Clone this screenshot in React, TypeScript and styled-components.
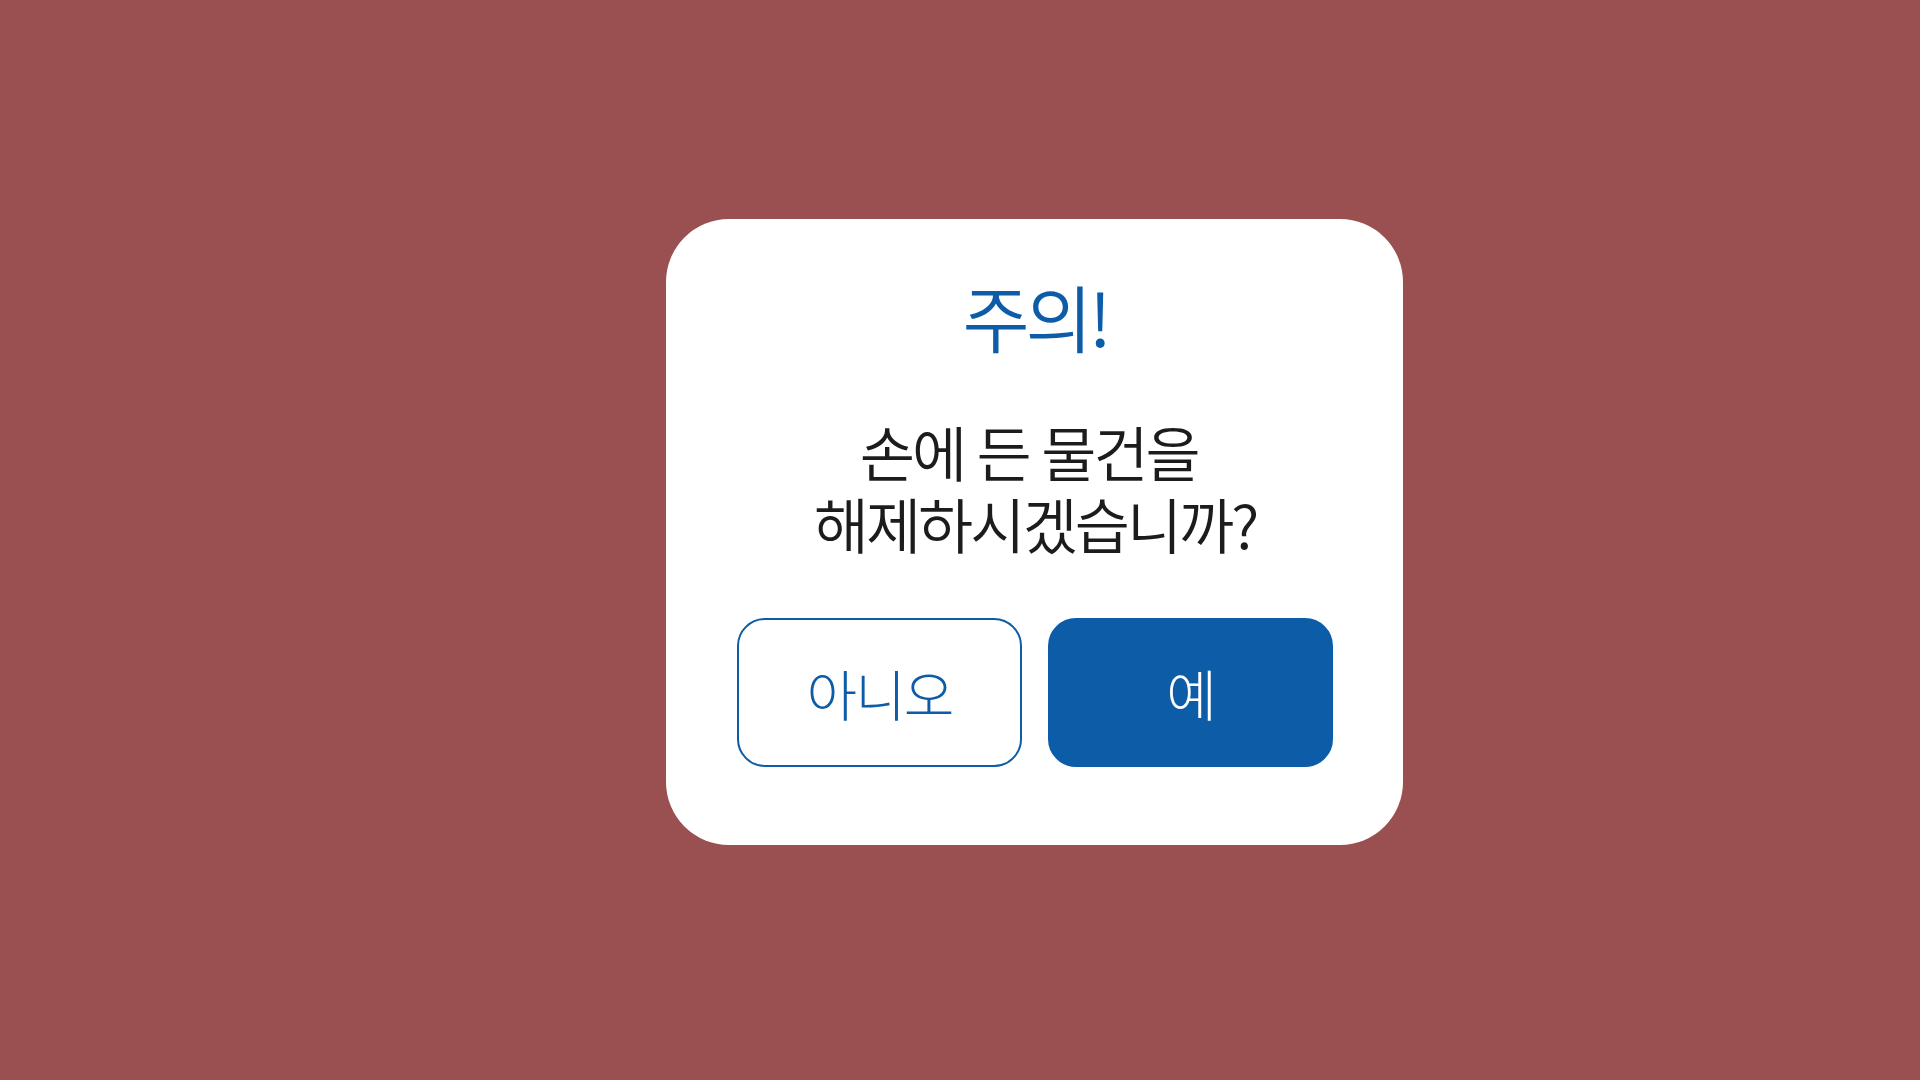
import React from "react";
import styled, { createGlobalStyle } from "styled-components";

const Global = createGlobalStyle`
  html, body { margin: 0; padding: 0; }
  body {
    background: #9a5050;
    font-family: "Noto Sans CJK KR", "Noto Sans", sans-serif;
  }
`;

const Page = styled.div`
  width: 1920px;
  height: 1080px;
  box-sizing: border-box;
  padding: 219px 0 0 666px;
  display: flex;
  align-items: flex-start;
`;

const Card = styled.div`
  width: 737px;
  height: 626px;
  box-sizing: border-box;
  background: #ffffff;
  border-radius: 63px;
  padding: 51px 70px 0 71px;
  display: flex;
  flex-direction: column;
  align-items: center;
`;

const Title = styled.h1`
  margin: 0;
  font-size: 73px;
  font-weight: 350;
  letter-spacing: -4px;
  line-height: 90px;
  color: #0c5ca8;
`;

const Message = styled.p`
  margin: 55px 0 0;
  font-size: 60px;
  font-weight: 350;
  letter-spacing: -3px;
  word-spacing: 2px;
  line-height: 72px;
  color: #1c1c1c;
  text-align: center;
`;

const Actions = styled.div`
  margin-top: auto;
  margin-bottom: 78px;
  display: grid;
  grid-template-columns: 285px 285px;
  gap: 26px;
`;

const Button = styled.button<{ $primary?: boolean }>`
  height: 149px;
  box-sizing: border-box;
  border-radius: 28px;
  border: 2px solid #0c5ca8;
  background: ${(p) => (p.$primary ? "#0c5ca8" : "#ffffff")};
  color: ${(p) => (p.$primary ? "#ffffff" : "#0c5ca8")};
  font-family: "Noto Sans CJK KR", "Noto Sans", sans-serif;
  font-size: 55px;
  font-weight: 300;
  letter-spacing: -2px;
  padding: 0 0 2px;
  cursor: pointer;
`;

export default function App() {
  return (
    <>
      <Global />
      <Page>
        <Card>
          <Title>주의!</Title>
          <Message>
            {"손에 든 물건을\u00a0"}
            <br />
            해제하시겠습니까?
          </Message>
          <Actions>
            <Button>아니오</Button>
            <Button $primary>예</Button>
          </Actions>
        </Card>
      </Page>
    </>
  );
}
